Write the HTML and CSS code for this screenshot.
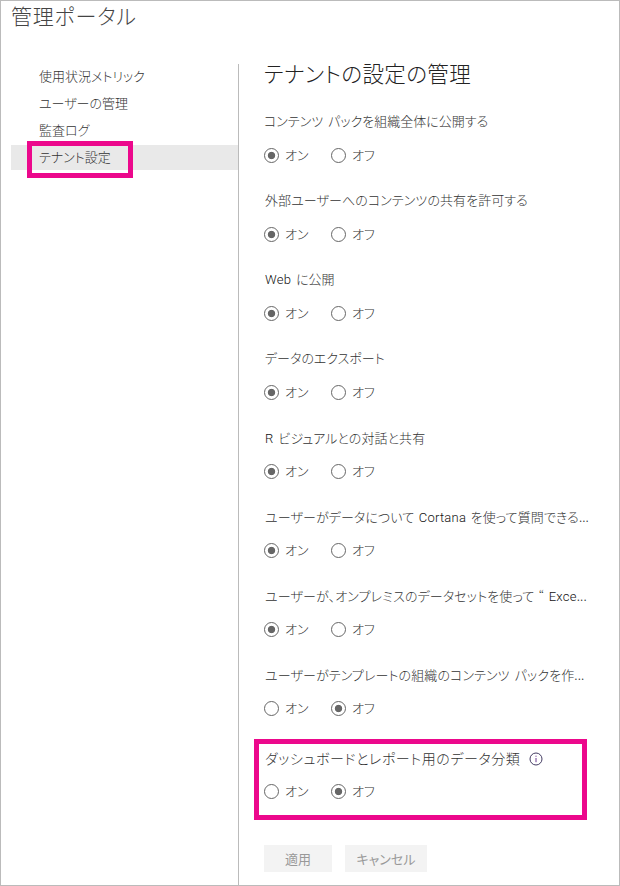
FILE: index.html
```html
<!DOCTYPE html>
<html lang="ja">
<head>
<meta charset="utf-8">
<title>管理ポータル</title>
<link rel="stylesheet" href="styles.css">
</head>
<body>
<div class="portal">
  <h1 class="portal-title">管理ポータル</h1>
  <div class="columns">
    <nav class="sidebar">
      <a class="nav-item nav-metrics">使用状況メトリック</a>
      <a class="nav-item nav-users">ユーザーの管理</a>
      <a class="nav-item nav-audit">監査ログ</a>
      <a class="nav-item nav-tenant active">テナント設定<span class="callout callout-nav"></span></a>
    </nav>
    <main class="content">
      <h2 class="content-title">テナントの設定の管理</h2>
      <section class="setting"><div class="label l1">コンテンツ パックを組織全体に公開する</div><div class="options"><span class="radio on"></span><span class="opt">オン</span><span class="radio"></span><span class="opt">オフ</span></div></section>
      <section class="setting"><div class="label l2">外部ユーザーへのコンテンツの共有を許可する</div><div class="options"><span class="radio on"></span><span class="opt">オン</span><span class="radio"></span><span class="opt">オフ</span></div></section>
      <section class="setting"><div class="label l3"><span class="latin">Web</span> に公開</div><div class="options"><span class="radio on"></span><span class="opt">オン</span><span class="radio"></span><span class="opt">オフ</span></div></section>
      <section class="setting"><div class="label l4">データのエクスポート</div><div class="options"><span class="radio on"></span><span class="opt">オン</span><span class="radio"></span><span class="opt">オフ</span></div></section>
      <section class="setting"><div class="label l5"><span class="latin">R</span> ビジュアルとの対話と共有</div><div class="options"><span class="radio on"></span><span class="opt">オン</span><span class="radio"></span><span class="opt">オフ</span></div></section>
      <section class="setting"><div class="label l6">ユーザーがデータについて <span class="latin">Cortana</span> を使って質問できる<span class="dots">...</span></div><div class="options"><span class="radio on"></span><span class="opt">オン</span><span class="radio"></span><span class="opt">オフ</span></div></section>
      <section class="setting"><div class="label l7">ユーザーが、オンプレミスのデータセットを使って “ <span class="latin">Exce</span><span class="dots">...</span></div><div class="options"><span class="radio on"></span><span class="opt">オン</span><span class="radio"></span><span class="opt">オフ</span></div></section>
      <section class="setting"><div class="label l8">ユーザーがテンプレートの組織のコンテンツ パックを作<span class="dots">...</span></div><div class="options"><span class="radio"></span><span class="opt">オン</span><span class="radio on"></span><span class="opt">オフ</span></div></section>
      <section class="setting classification">
        <span class="callout callout-setting"></span>
        <div class="label l9"><span>ダッシュボードとレポート用のデータ分類</span><svg class="info" viewBox="0 0 14 14"><circle cx="7" cy="7" r="6" fill="none" stroke="#443c63" stroke-width="1"/><path d="M7 6v4.2M7 3.7v1.1" stroke="#6d3b91" stroke-width="1"/></svg></div>
        <div class="options"><span class="radio"></span><span class="opt">オン</span><span class="radio on"></span><span class="opt">オフ</span></div>
      </section>
      <div class="actions"><button class="apply" disabled>適用</button><button class="cancel" disabled>キャンセル</button></div>
    </main>
  </div>
</div>
</body>
</html>
```
FILE: styles.css
```css
* { box-sizing: border-box; }
body {
  margin: 0;
  background: #fff;
  color: #333;
  font-family: "Noto Sans CJK JP", sans-serif;
  font-weight: 300;
  font-size: 13px;
  font-feature-settings: "palt";
}
.portal { height: 886px; border: 1px solid #bbb; overflow: hidden; }
.portal-title {
  margin: 0 0 0 10px;
  height: 63px;
  font-size: 21px;
  font-weight: 300;
  line-height: 29px;
  letter-spacing: 0.8px;
  color: #444;
}
.columns { display: flex; height: 821px; }
.sidebar {
  width: 238px;
  padding-left: 10px;
  border-right: 1px solid #bbb;
}
.nav-item {
  display: block;
  position: relative;
  height: 27px;
  padding-left: 28px;
  line-height: 23px;
  white-space: nowrap;
}
.nav-item.active { height: 25px; background: #e9e9e9; }
.callout { position: absolute; border: 5px solid #ec088c; }
.callout-nav { left: 16px; top: -4px; width: 106px; height: 37px; }
.content { padding-left: 25px; width: 380px; }
.content-title {
  margin: 0;
  height: 46px;
  line-height: 17px;
  font-size: 21.5px;
  font-weight: 300;
  letter-spacing: 0.4px;
  color: #222;
  white-space: nowrap;
}
.setting { height: 79.15px; position: relative; }
.label {
  height: 24px;
  line-height: 22px;
  margin-bottom: 13px;
  padding-left: 1px;
  white-space: nowrap;
  word-spacing: 2px;
}
.latin { font-family: Roboto, "Liberation Sans", sans-serif; font-weight: 300; letter-spacing: 0.25px; color: #111; }
.l1 { padding-left: 0; }
.l2, .l5 { letter-spacing: 0.07px; }
.l6, .l8 { letter-spacing: 0.1px; }
.l7 { letter-spacing: 0.12px; }
.l6, .l7 { word-spacing: 1.4px; }
.options { display: flex; align-items: center; height: 16px; }
.radio {
  width: 15px;
  height: 15px;
  margin-right: 6px;
  border: 1px solid #666;
  border-radius: 50%;
  flex: none;
}
.radio.on { background: radial-gradient(circle, #666 3.3px, transparent 4.1px); }
.opt { width: 46px; line-height: 14px; margin-top: -1px; }
.classification { height: 79px; padding-top: 4px; }
.classification .label { display: flex; align-items: center; font-size: 14px; letter-spacing: 0.58px; line-height: 20px; margin-bottom: 12px; }
.classification .label > span { margin-top: -2px; }
.info { width: 14px; height: 14px; margin-left: 9px; }
.callout-setting { left: -10px; top: -4px; width: 333px; height: 81px; }
.actions { display: flex; gap: 13px; margin-top: 23px; }
.actions button {
  height: 27px;
  padding: 0;
  border: 0;
  background: #f3f3f3;
  color: #999;
  font: inherit;
  font-weight: 400;
  font-feature-settings: "palt";
}
.apply { width: 68px; }
.cancel { width: 82px; }
```
